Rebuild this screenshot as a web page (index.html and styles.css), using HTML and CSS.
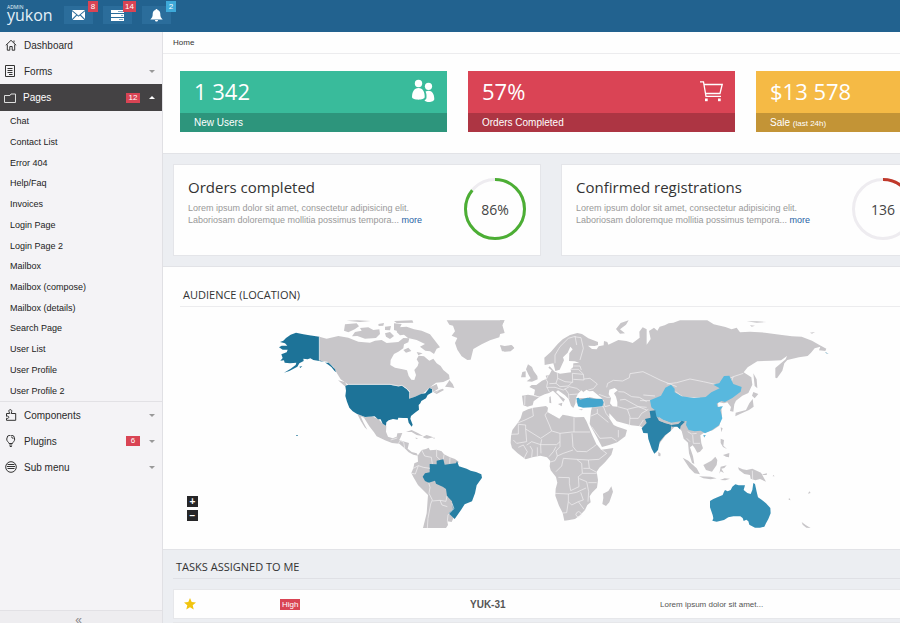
FILE: index.html
```html
<!DOCTYPE html>
<html lang="en">
<head>
<meta charset="utf-8">
<title>Yukon Admin</title>
<link rel="stylesheet" href="styles.css">
</head>
<body>
<header class="topbar">
  <a class="logo" href="#"><small>ADMIN</small><span>yukon</span></a>
  <button class="top-btn" aria-label="Messages">
    <svg width="13" height="10" viewBox="0 0 13 10"><path fill="#fff" d="M0 0h13L6.5 5.4zM0 1.2 4.2 4.8 0 9zM13 1.2 8.8 4.8 13 9zM.6 10 5 5.5l1.500 1.200L8 5.500l4.400 4.500z"/></svg>
    <span class="badge">8</span>
  </button>
  <button class="top-btn" aria-label="Tasks">
    <svg width="13" height="11" viewBox="0 0 13 11"><path fill="#fff" d="M0 0h13v3H0zM0 4h13v3H0zM0 8h13v3H0z"/><path stroke="#7fa8c6" d="M7 1.500h5M10 5.500h2M8 9.500h4"/></svg>
    <span class="badge">14</span>
  </button>
  <button class="top-btn" aria-label="Notifications">
    <svg width="13" height="13" viewBox="0 0 13 13"><path fill="#fff" d="M6.500 0c.8 0 1 .5 1 1.100C9.600 1.600 10.300 3.300 10.300 5c0 2.500.7 4 2.400 5.500H.3C2 9 2.700 7.500 2.700 5c0-1.700.7-3.400 2.800-3.900 0-.6.2-1.100 1-1.100zM5 11h3c0 2-3 2-3 0z"/></svg>
    <span class="badge badge-info">2</span>
  </button>
</header>
<div class="layout">
  <nav class="sidebar">
    <ul class="menu">
      <li><a class="item" href="#"><svg class="ico" viewBox="0 0 12 12"><path d="M.8 6.300 6 1.300l5.200 5M2.300 5.500v5.700h2.500V7.500h2.400v3.700h2.500V5.500M9 1.500v2"/></svg>Dashboard</a></li>
      <li><a class="item" href="#"><svg class="ico" viewBox="0 0 12 12"><path d="M.5.5h9v11h-9zM2.500 3.500h5M2.500 5.500h5M2.500 7.500h5M4 9.500h3.500"/></svg>Forms<i class="caret"></i></a></li>
      <li>
        <a class="item active" href="#"><svg class="ico" viewBox="0 0 12 12"><path d="M.5 3.500h5.500l1-1.500h4.500v8.500H.5z"/></svg>Pages<span class="count">12</span><i class="caret up"></i></a>
        <ul class="submenu">
          <li><a href="#">Chat</a></li><li><a href="#">Contact List</a></li><li><a href="#">Error 404</a></li><li><a href="#">Help/Faq</a></li><li><a href="#">Invoices</a></li><li><a href="#">Login Page</a></li><li><a href="#">Login Page 2</a></li><li><a href="#">Mailbox</a></li><li><a href="#">Mailbox (compose)</a></li><li><a href="#">Mailbox (details)</a></li><li><a href="#">Search Page</a></li><li><a href="#">User List</a></li><li><a href="#">User Profile</a></li><li><a href="#">User Profile 2</a></li>
        </ul>
      </li>
      <li><a class="item" href="#"><svg class="ico" viewBox="0 0 12 12"><path d="M1.500 4.500h3.200C3.200 1.500 4 .7 5.300.7s2 .9.900 3.800h4.500v6.800H1.500V9.300c3 1 3-3.200 0-2z"/></svg>Components<i class="caret"></i></a></li>
      <li><a class="item" href="#"><svg class="ico" viewBox="0 0 12 12"><path d="M4 8.500C3.800 7 1.700 6.500 1.700 4a4 4 0 0 1 8 0c0 2.500-2 3-2.200 4.500zM4.200 10h3M4.800 11.500h2M6 2c1.200 0 1.900.8 2 2"/></svg>Plugins<span class="count">6</span><i class="caret"></i></a></li>
      <li><a class="item" href="#"><svg class="ico" viewBox="0 0 12 12"><circle cx="6" cy="6" r="5.300"/><path d="M2.500 3.500h7M2 5.500h8M2.500 7.500h7"/></svg>Sub menu<i class="caret"></i></a></li>
    </ul>
    <button class="collapse" aria-label="Collapse menu">«</button>
  </nav>
  <main class="main">
    <div class="crumbs"><a href="#">Home</a></div>
    <section class="stats">
      <article class="stat green">
        <div class="stat-top"><b>1 342</b><svg width="24" height="24" viewBox="0 0 24 24"><g fill="#fff"><circle cx="7.500" cy="4.500" r="3.700"/><path d="M1 18c0-5 2-9 6.500-9s6.200 4 6.200 9c0 3.500-12.700 3.500-12.700 0z"/><circle cx="17.500" cy="7.300" r="3.600"/><path d="M14.500 12.600c5-2.600 8.800 1 8.800 7.400 0 3.700-8.800 3.700-9.800 1.200 1.900-.6 2.100-2 2-4.200 0-1.800-.4-3.200-1-4.400z"/></g></svg></div>
        <div class="stat-foot">New Users</div>
      </article>
      <article class="stat red">
        <div class="stat-top"><b>57%</b><svg width="24" height="24" viewBox="0 0 24 24"><g fill="none" stroke="#fff" stroke-width="1.300"><path d="M1 2.800h3.500l2.500 14.500h15M5 5.500h18.200L21 14.500H6.500"/></g><g fill="#fff"><rect x="6" y="19.500" width="2.700" height="2.700"/><rect x="19" y="19.500" width="2.700" height="2.700"/></g></svg></div>
        <div class="stat-foot">Orders Completed</div>
      </article>
      <article class="stat yellow">
        <div class="stat-top"><b>$13 578</b></div>
        <div class="stat-foot">Sale <small>(last 24h)</small></div>
      </article>
    </section>
    <section class="panels">
      <article class="panel">
        <div class="panel-text"><h2>Orders completed</h2><p>Lorem ipsum dolor sit amet, consectetur adipisicing elit.<br>Laboriosam doloremque mollitia possimus tempora... <a href="#">more</a></p></div>
        <div class="ring"><svg viewBox="0 0 62 62"><circle cx="31" cy="31" r="29.500" stroke="#eeecf0"/><circle cx="31" cy="31" r="29.500" stroke="#4cae34" pathLength="100" stroke-dasharray="86 100" transform="rotate(-90 31 31)"/></svg><span>86%</span></div>
      </article>
      <article class="panel">
        <div class="panel-text"><h2>Confirmed registrations</h2><p>Lorem ipsum dolor sit amet, consectetur adipisicing elit.<br>Laboriosam doloremque mollitia possimus tempora... <a href="#">more</a></p></div>
        <div class="ring"><svg viewBox="0 0 62 62"><circle cx="31" cy="31" r="29.500" stroke="#eeecf0"/><circle cx="31" cy="31" r="29.500" stroke="#c0392b" pathLength="100" stroke-dasharray="30 100" transform="rotate(-90 31 31)"/></svg><span>136</span></div>
      </article>
    </section>
    <section class="audience">
      <h3>AUDIENCE (LOCATION)</h3>
      <div class="map">
        <svg class="world" viewBox="180 320 720 208" role="img" aria-label="World map">
          <g transform="translate(270 310) scale(.33333)">
            <g class="land">
              <path d="M148 80 170 86 205 78 235 83 265 95 300 98 315 92 335 90 350 99 385 96 400 84 418 85 415 97 402 103 400 115 385 125 372 132 362 150 361 165 375 173 398 178 411 181 416 198 424 209 433 210 438 195 433 180 443 168 446 158 440 148 446 137 462 139 478 152 490 146 500 160 512 168 520 180 537 194 539 207 520 216 498 218 480 232 500 222 505 236 490 246 486 236 478 234 460 250 435 260 417 266 420 245 405 232 360 224 235 224 212 208 199 187 190 170 172 155 148 152z"/>
              <path d="M525 230 535 216 538 210 548 222 553 234 540 232zM490 246 518 236 522 240 500 252zM204 211 225 216 233 231 224 228z"/>
              <path d="M225 43 260 40 267 49 254 58 235 67 222 62zM255 66 275 62 270 54 295 52 310 60 328 58 330 72 318 84 285 86 262 78 246 79zM345 70 360 66 372 78 360 87 348 80zM372 40 395 42 384 64 372 60zM345 50 363 48 360 61 345 60zM380 66 386 52 410 50 432 58 455 62 480 73 498 96 510 112 500 116 492 132 480 124 466 122 450 110 465 102 440 90 414 84 402 74 390 76zM400 120 415 113 424 123 408 128zM325 42 342 39 340 47 326 48zM372 33 427 31 430 38 380 39zM230 32 262 31 302 33 270 36zM440 126 458 130 445 136z"/>
              <path d="M530 31H703L694 50 692 65 688 82 660 91 635 103 610 117 602 149 592 150 575 139 562 119 555 99 562 84 545 77 555 64 549 47 538 44z"/>
              <path d="M690 108 705 112 726 106 733 114 722 124 704 125 695 121 701 117z"/>
              <path d="M262 312 285 322 305 319 325 327 338 341 349 347 348 365 354 380 368 385 380 380 382 370 397 369 392 382 388 390 404 395 417 399 413 416 425 426 440 430 444 437 430 434 416 427 404 415 388 401 366 399 345 391 320 379 312 367 298 349 282 323 272 319 280 337 292 359 284 352 272 332z"/>
              <path d="M408 366 425 360 445 370 460 379 440 375 425 366zM459 380 470 375 490 382 472 386 461 383zM435 383 444 384 440 387zM487 383 495 383 493 386z"/>
              <path d="M443 437 455 420 468 417 476 413 480 421 500 419 515 424 522 433 540 442 555 447 566 455 560 470 580 500 550 600 552 620 545 636 532 634 534 645 528 654H459L470 610 474 555 462 543 444 525 430 501 424 489 430 475 433 460 444 455z"/>
            </g>
            <path class="us" d="M148 80 118 76 100 73 78 68 62 74 48 84 40 92 30 96 45 100 52 107 35 107 27 112 38 119 53 119 50 127 34 133 38 144 31 152 42 151 44 158 60 160 79 158 77 165 62 176 42 188 58 183 82 170 88 160 101 153 100 146 113 148 121 145 130 150 148 153 164 157 175 164 184 171 193 182 198 187 195 178 183 165 176 158 168 158 148 151zM88 170 97 168 91 174z"/>
            <path class="us" d="M235 224H360L385 229 396 227 410 237 418 246 417 266 435 260 453 252 466 250 478 234 486 237 487 247 473 255 468 265 454 273 451 280 446 285 447 299 433 310 423 318 421 326 428 344 425 350 416 338 413 324 400 324 385 323 383 329 369 327 356 331 349 337 348 347 338 341 332 328 324 328 314 319 285 321 260 311 248 304 238 293 231 275 226 258 228 242 226 228z"/>
            <path class="us" d="M79 375h4v3h-4z"/>
            <path class="br" d="M479 462 500 463 500 452 520 448 524 464 540 462 558 460 561 453 567 469 590 476 602 482 618 486 634 493 636 503 620 526 615 550 606 574 584 583 573 600 554 627 536 610 549 598 546 574 531 558 528 537 518 530 498 521 495 512 476 518 465 513 458 500 465 490 479 487z"/>
            <path class="line" d="M148 80V152M235 223H360L385 228 396 226 410 236 419 246M455 420 464 438 484 442 487 462M430 475 445 467 460 472 480 475M445 467 436 492 425 490M476 518 480 532 477 550 487 570 482 582 474 625 472 654M487 573 510 571 528 574 531 558M510 571 516 585 532 590M546 580 552 596 543 604 534 615 532 634M500 420 500 440 510 449M522 434 520 448M540 443 539 461M362 390 382 384M388 390 401 397 404 414M510 235 498 248M385 401 390 393"/>
          </g>
          <g transform="translate(500 310) scale(.33333)">
            <g class="land">
              <path d="M68 305 84 298 100 293 138 288 144 293 142 306 157 314 178 326 188 314 205 317 226 322 252 321 259 333 267 352 277 376 289 402 304 419 320 417 340 414 334 434 315 457 298 473 290 485 294 510 291 533 276 548 269 559 272 577 262 585 255 600 240 616 225 627 204 631 193 632 188 609 177 587 166 557 167 536 172 518 168 501 152 481 149 469 151 453 141 442 121 437 97 442 77 448 53 430 36 414 32 399 33 379 37 360 53 339 62 325z"/>
              <path d="M334 529 339 545 328 577 318 588 307 582 310 564 309 551 325 543z"/>
              <path d="M66 257 84 254 102 257 118 261 101 274 98 286 82 290 70 286zM102 255 105 239 88 231 95 225 109 225 126 212 140 206 137 197 148 194 155 181 145 173 149 169 164 185 180 191 213 187 212 178 219 172 220 160 238 158 224 154 207 153 208 130 218 118 211 110 203 128 189 142 192 151 179 179 166 183 160 160 134 165 133 143 153 125 173 102 188 88 210 75 232 69 246 72 265 85 294 96 294 105 284 108 264 107 276 117 290 118 296 109 311 106 312 93 322 96 325 104 355 90 379 93 398 99 419 83 418 65 428 52 440 58 440 104 452 87 447 63 462 53 472 62 479 50 494 46 506 40 520 38 540 31H622L641 43 676 51 695 58 710 53 720 67 750 65 795 68 840 74 876 79 905 80 936 92 957 104 979 116 976 123 957 121 961 110 944 115 933 128 923 138 897 142 862 150 853 160 847 182 831 205 826 203 826 174 857 148 861 138 843 151 814 152 772 154 743 172 731 187 754 202 757 224 745 249 727 257 708 272 703 283 700 305 690 303 693 291 682 277 672 280 654 276 655 293 664 289 666 318 658 347 638 361 611 369 601 376 604 400 609 415 600 425 592 428 584 414 578 406 570 412 579 439 583 462 576 458 567 430 564 398 551 386 545 363 529 345 514 361 497 376 478 401 468 430 456 408 448 370 436 357 421 349 394 346 369 339 350 334 328 310 328 325 341 345 352 350 366 355 381 360 376 379 352 397 330 404 306 411 292 384 274 352 269 341 273 303 276 291 260 288 237 289 229 276 233 265 245 264 267 264 254 250 244 241 234 251 228 264 226 281 220 294 213 287 206 267 195 256 174 241 168 246 180 257 195 268 190 276 175 257 159 242 147 249 134 253 118 260z"/>
              <path d="M80 214 92 205 86 195 78 178 84 163 96 171 101 183 112 198 113 208 96 215zM63 202 67 186 77 184 77 202zM174 282 187 278 185 289zM148 261 152 259 154 280 148 278zM0 105 14 108 34 105 42 114 28 123 6 124zM348 57 362 39 386 31 378 44 360 58 375 70 360 71zM0 31H14L7 45 14 69 0 72zM475 425 482 431 481 439 475 438zM235 299 248 297 246 301z"/>
              <path d="M760 190 770 208 772 235 764 228zM760 246 775 252 764 265 756 257zM758 267 761 290 747 300 720 312 706 319 707 308 738 300 748 280zM662 352 668 355 664 367zM610 376 617 375 613 383zM662 386 672 390 670 407 681 417 669 411 662 399zM688 429 687 442 678 440 669 435zM661 414 652 425M548 443 565 452 590 475 600 493 584 490 568 474zM597 499 632 500 650 505 632 508 610 505zM610 465 634 452 646 440 652 450 650 465 636 485 618 480zM662 470 680 466 673 474 664 476 672 489 662 484 658 491zM714 472 728 478 740 480 757 476 783 488 798 515 780 507 766 511 752 506 750 495 733 492 717 480zM784 494 801 490 800 495zM660 510 674 505 690 506 676 511zM820 495 824 499 818 499zM867 563 872 571 866 569zM928 544 932 549 924 551zM905 636 918 646 932 654 919 653 908 644zM740 34 770 34 800 36 770 38zM930 68 945 66 936 71zM750 46 765 47 755 50z"/>
            </g>
            <path class="sea" d="M328 239 344 234 353 241 342 250 348 260 352 276 352 290 338 289 330 280 333 265 326 253zM235 253 252 251 250 246 260 239 267 244 279 243 298 259 308 266 290 266 269 261 250 264 235 263zM158 315 170 310 150 292z"/>
            <path class="line" d="M53 339 75 330 100 318 97 293M33 373 55 372 55 343 77 345 77 357 122 385 155 363 148 345 135 315 142 306M155 363 180 370 216 366 270 366M222 322 222 366M216 370 219 410 230 424 260 425 280 411 290 403M180 370 180 410 168 423 172 438 190 430 219 420M125 388 122 404 170 404 180 395M77 357 80 395 50 400 40 390M80 405 95 395 122 404 123 430M55 412 70 405 82 425 72 445M95 442 97 420 90 408M112 438 112 412M147 440 160 425 168 410M172 438 165 452 151 456M190 445 230 448 265 450 297 448 320 430 300 415M190 445 185 468 168 485M230 448 245 460 247 490 235 500 237 530 212 542 208 520 208 503 175 502M165 550 205 552 230 547 245 540 258 534M265 450 268 475 250 475M247 490 290 490M268 475 290 487M238 506 260 515 266 545M205 552 205 575 200 608 188 609M205 575 215 585 235 575 250 570 242 547M235 575 252 598M266 545 264 575M230 608a8 8 0 1 0 12 0 8 8 0 0 0-12 0M290 518 265 518"/>
            <path class="line" d="M101 257 119 261M75 257 74 285M135 204 143 216 140 230 148 246M140 206 145 195M172 189 173 205 168 220 148 221M173 205 195 215 218 217 217 190M168 220 180 230 205 228 216 217M140 232 165 232 190 240 208 230 230 235 241 243M195 236 205 250 207 267M208 254 235 252M217 190 250 193 252 210 220 208M252 207 270 205 292 222 280 236 265 240M212 178 235 178 250 192M220 168 240 168 244 180M165 160 165 135 180 110 205 85 222 80 243 83 250 115 240 150M225 78 230 105M320 232 323 220 340 211 368 213 388 203 390 191 429 185 452 196 480 210 510 222 530 230M297 253 321 262 330 262M310 270 315 290 330 286M276 291 310 289 318 310 330 325M273 318 292 310 292 297M292 310 325 337M275 350 300 385 335 383 350 393M355 360 355 382M353 290 382 298 390 320 388 350M355 245 372 246 395 260 418 262 440 275M360 270 375 268 415 290 440 292M382 298 415 290 440 300M390 325 415 325 425 310 445 298M418 348 430 330M430 255 465 258M420 272 452 272M500 222 530 218 570 207 610 215 650 224 700 200 730 190M700 200 690 225M527 245 550 262 600 264M495 335 515 342M515 348 535 348M563 365 575 372 590 370M578 375 580 400 600 400M570 395 560 385M757 482 758 508"/>
            <path class="cn" d="M450 271 483 257 496 233 513 224 524 236 524 247 545 259 582 264 617 261 634 247 659 235 640 224 658 219 672 198 688 197 700 222 725 231 722 245 697 264 675 276 664 273 650 281 653 291 669 289 661 300 667 325 657 346 635 361 615 370 602 362 584 364 566 360 558 345 560 333 542 334 512 338 489 329 468 319 465 301 454 292z"/>
            <path class="cn" d="M610 376 617 375 613 382z"/>
            <path class="in" d="M449 303 466 301 469 318 477 332 514 344 512 363 495 376 479 395 474 420 463 431 455 416 445 387 443 370 430 369 425 355 440 339 435 327 452 323zM514 345 535 342 545 332 555 335 542 348 540 358 532 350 515 350z"/>
            <path class="land" d="M477 321 490 330 513 338 514 344 496 340 478 332z"/>
            <path class="tr" d="M229 265 236 263 240 269 262 263 282 266 306 267 311 277 307 289 278 292 249 293 234 289z"/>
            <path class="au" d="M630 573 640 567 668 555 672 545 675 540 683 544 692 540 697 530 706 523 716 526 735 526 731 540 742 549 752 552 757 540 760 519 765 522 770 545 774 562 786 570 798 580 811 594 812 610 805 627 798 640 793 650 780 653 765 653 748 644 745 634 739 629 731 633 728 624 721 619 700 619 685 622 672 630 650 635 637 632 640 625 638 615 630 592z"/>
            <path class="us" d="M975 126 981 129 986 131 979 130z"/>
          </g>
        </svg>
        <div class="zoom"><button aria-label="Zoom in">+</button><button aria-label="Zoom out">−</button></div>
      </div>
    </section>
    <section class="tasks">
      <h3>TASKS ASSIGNED TO ME</h3>
      <table>
        <tr><td><svg width="12" height="12" viewBox="0 0 12 12"><path fill="#f1c40f" d="M6 0 7.700 4 12 4.400 8.700 7.200 9.700 11.500 6 9.200 2.300 11.500 3.300 7.200 0 4.400 4.300 4z"/></svg></td><td><span class="high">High</span></td><td><b>YUK-31</b></td><td>Lorem ipsum dolor sit amet...</td></tr>
        <tr><td></td><td></td><td></td><td></td></tr>
      </table>
    </section>
  </main>
</div>
</body>
</html>
```
FILE: styles.css
```css
* { box-sizing: border-box; }
body {
  margin: 0;
  height: 100vh;
  display: flex;
  flex-direction: column;
  overflow: hidden;
  font: 10px "Liberation Sans", Arial, sans-serif;
  color: #333;
  background: #fefefe;
}
ul { list-style: none; margin: 0; padding: 0; }
a { color: inherit; text-decoration: none; }
button { border: 0; padding: 0; font: inherit; cursor: pointer; }
h2, h3, p { margin: 0; font-weight: 400; }

.topbar {
  flex: none;
  height: 32px;
  display: flex;
  align-items: flex-start;
  gap: 10px;
  padding: 6px 7px;
  background: #22628f;
}
.logo {
  width: 47px;
  display: flex;
  flex-direction: column;
  color: #e4f0f8;
  font-family: "Open Sans", sans-serif;
}
.logo small { font-size: 5px; line-height: 3px; }
.logo span { font-size: 16px; line-height: 13px; }
.top-btn {
  position: relative;
  width: 29px;
  height: 18px;
  display: grid;
  place-items: center;
  background: #2b6d9b;
}
.badge {
  position: absolute;
  left: 24px;
  top: -5px;
  min-width: 10px;
  padding: 0 2px;
  font-size: 8px;
  line-height: 11px;
  text-align: center;
  color: #fff;
  background: #d94454;
}
.top-btn:nth-of-type(2) .badge { left: 20px; }
.badge-info { background: #3ea9d9; }

.layout { flex: 1; min-height: 0; display: flex; }
.sidebar {
  flex: none;
  width: 163px;
  display: flex;
  flex-direction: column;
  justify-content: space-between;
  background: #f4f3f6;
  border-right: 1px solid #e0e0e4;
}
.item {
  height: 26px;
  display: flex;
  align-items: center;
  padding: 0 7px 0 5px;
  color: #2a2a2a;
}
.ico {
  width: 12px;
  height: 12px;
  margin-right: 7px;
  fill: none;
  stroke: #333;
}
.item.active { height: 27px; padding-left: 4px; background: #444244; color: #fff; }
.active .ico { stroke: #ddd; }
.caret {
  margin-left: auto;
  border: 3px solid transparent;
  border-top-color: #999;
  border-bottom: 0;
}
.caret.up { border-top: 0; border-bottom: 3px solid #fff; }
.count {
  width: 14px;
  margin-left: auto;
  font-size: 8px;
  line-height: 10px;
  text-align: center;
  color: #fff;
  background: #d94454;
}
.count + .caret { margin-left: 9px; }
.submenu {
  display: grid;
  grid-auto-rows: 1fr;
  align-items: center;
  height: 291px;
  padding-left: 10px;
  font-size: 9px;
  color: #222;
  border-bottom: 1px solid #e2e1e5;
}
.collapse {
  height: 13px;
  overflow: hidden;
  padding-right: 5px;
  line-height: 18px;
  font-size: 12px;
  color: #888;
  background: #eeedf0;
  border-top: 1px solid #e2e1e5;
}

.main { flex: 1; min-width: 0; overflow: hidden; }
.crumbs {
  height: 22px;
  padding-left: 10px;
  font-size: 8px;
  line-height: 22px;
  border-bottom: 1px solid #ececee;
}
.stats {
  display: grid;
  grid-template-columns: repeat(3, minmax(267px, 1fr));
  gap: 21px;
  padding: 17px 0 21px 17px;
}
.stat { color: #fff; }
.stat-top {
  height: 42px;
  display: flex;
  align-items: center;
  justify-content: space-between;
  padding: 0 12px 2px 14px;
}
.stat-top b { font: 22px "Open Sans", sans-serif; }
.stat-foot { height: 19px; padding-left: 14px; line-height: 20px; }
.stat-foot small { font-size: 8px; }
.green { background: #39bb9b; }
.green .stat-foot { background: #2d957c; }
.red { background: #da4455; }
.red .stat-foot { background: #ad3543; }
.yellow { background: #f5ba45; }
.yellow .stat-foot { background: #c39436; }

.panels {
  display: grid;
  grid-template-columns: repeat(2, minmax(368px, 1fr));
  gap: 20px;
  padding: 10px 0 10px 10px;
  background: #eceef2;
  border: solid #e2e3e7;
  border-width: 1px 0;
}
.panel {
  height: 92px;
  display: flex;
  justify-content: space-between;
  padding: 13px 14px;
  background: #fefefe;
  border: 1px solid #e4e5e9;
}
.panel h2 { font: 15px/18px "Open Sans", sans-serif; color: #333; }
.panel p { font-size: 9px; line-height: 12px; padding-top: 6px; color: #999; white-space: nowrap; }
.panel p a { color: #1f5fa5; }
.ring { width: 62px; height: 62px; display: grid; }
.ring > * { grid-area: 1 / 1; }
.ring circle { fill: none; stroke-width: 3; }
.ring span { place-self: center; font: 14px "Open Sans", sans-serif; color: #444; }

h3 { font: 11px/22px "Open Sans", sans-serif; color: #333; }
.audience { padding: 17px 0 21px 17px; }
.audience h3 { padding-left: 3px; border-bottom: 1px solid #ececee; }
.map { position: relative; padding-top: 13px; }
.world { display: block; width: 100%; height: 208px; }
.land { fill: #c8c6c9; }
.sea { fill: #fefefe; }
.line { fill: none; stroke: #f4f3f5; stroke-width: 2; }
.us { fill: #1d7398; }
.br { fill: #277fa3; }
.in { fill: #2a83a9; }
.au { fill: #358fb5; }
.tr { fill: #44a5cd; }
.cn { fill: #58b8de; }
.zoom { position: absolute; left: 7px; bottom: 7px; display: grid; gap: 3px; }
.zoom button {
  width: 11px;
  height: 11px;
  font-weight: 700;
  line-height: 10px;
  color: #fff;
  background: #262628;
}

.tasks {
  padding: 6px 0 0 10px;
  background: #eceef2;
  border-top: 1px solid #e2e3e7;
}
.tasks h3 { padding-left: 3px; border-bottom: 1px solid #dfe0e5; }
.tasks table {
  width: 100%;
  margin-top: 7px;
  table-layout: fixed;
  border-spacing: 0 3px;
  font-size: 8px;
  color: #555;
}
.tasks td { height: 30px; padding: 0 0 0 11px; background: #fefefe; border: solid #e6e7ea; border-width: 1px 0; }
.tasks td:first-child { width: 96px; padding-left: 10px; border-left-width: 1px; }
.tasks td:nth-child(2), .tasks td:nth-child(3) { width: 190px; }
.tasks td svg { display: block; }
.tasks b { font-size: 10px; }
.high { display: inline-block; padding: 0 2px; line-height: 11px; color: #fff; background: #d94454; }
```
